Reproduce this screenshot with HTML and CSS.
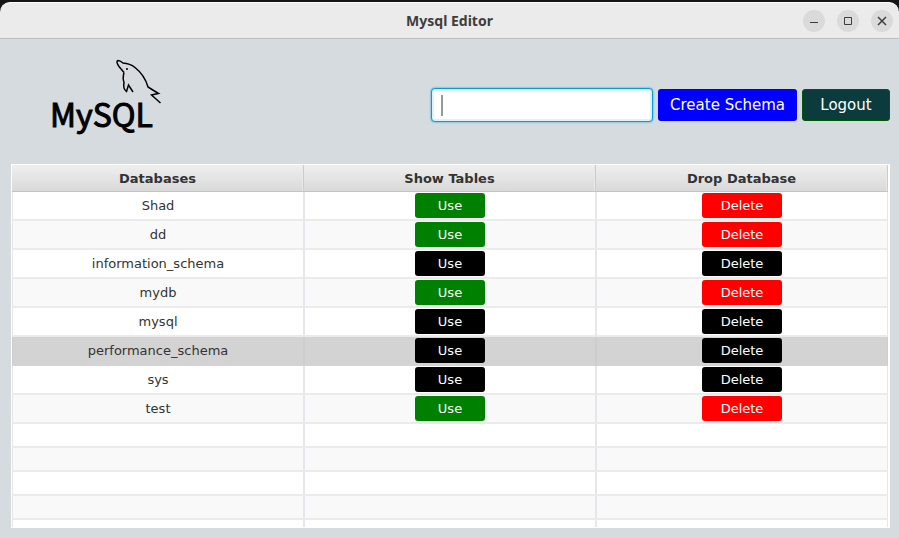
FILE: index.html
```html
<!DOCTYPE html>
<html lang="en">
<head>
<meta charset="utf-8">
<title>Mysql Editor</title>
<link rel="stylesheet" href="styles.css">
</head>
<body>
<div class="window">
  <header class="titlebar">
    <h1 class="title">Mysql Editor</h1>
    <div class="controls">
      <button class="control" type="button" aria-label="Minimize"><svg viewBox="0 0 22 22"><path d="M7 12.5h8"/></svg></button>
      <button class="control" type="button" aria-label="Maximize"><svg viewBox="0 0 22 22"><path d="M7.5 7.5h7v7h-7z"/></svg></button>
      <button class="control" type="button" aria-label="Close"><svg viewBox="0 0 22 22"><path d="M7 7l8 8M15 7l-8 8" stroke-width="1.5"/></svg></button>
    </div>
  </header>
  <main class="content">
    <div class="toolbar">
      <svg class="logo" viewBox="0 0 130 90" role="img" aria-label="MySQL">
        <text class="logo-text" x="10" y="77">MySQL</text>
        <path class="dolphin" d="M84 22.500L79 16.500Q75.500 11.500 78 10.500Q80 10.500 83 13Q90 13.500 95 17.500C102 23 106 30 108 37L112 39.500L118.500 43.500L111.500 45L120.500 53M84 22.500C82.500 28 83 30 84 32.500C83 37 84.500 40 86.500 41.500L88.500 35L93 42"/>
        <circle cx="87" cy="19" r="1"/>
      </svg>
      <form class="actions">
        <input class="schema" type="text" aria-label="Schema name" autocomplete="off">
        <span class="caret"></span>
        <button class="create" type="button">Create Schema</button>
        <button class="logout" type="button">Logout</button>
      </form>
    </div>
    <div class="table-view">
      <table>
        <thead><tr><th>Databases</th><th>Show Tables</th><th>Drop Database</th></tr></thead>
        <tbody>
          <tr><td>Shad</td><td><button class="use" type="button">Use</button></td><td><button class="drop" type="button">Delete</button></td></tr>
          <tr><td>dd</td><td><button class="use" type="button">Use</button></td><td><button class="drop" type="button">Delete</button></td></tr>
          <tr class="system"><td>information_schema</td><td><button class="use" type="button">Use</button></td><td><button class="drop" type="button">Delete</button></td></tr>
          <tr><td>mydb</td><td><button class="use" type="button">Use</button></td><td><button class="drop" type="button">Delete</button></td></tr>
          <tr class="system"><td>mysql</td><td><button class="use" type="button">Use</button></td><td><button class="drop" type="button">Delete</button></td></tr>
          <tr class="system selected"><td>performance_schema</td><td><button class="use" type="button">Use</button></td><td><button class="drop" type="button">Delete</button></td></tr>
          <tr class="system"><td>sys</td><td><button class="use" type="button">Use</button></td><td><button class="drop" type="button">Delete</button></td></tr>
          <tr><td>test</td><td><button class="use" type="button">Use</button></td><td><button class="drop" type="button">Delete</button></td></tr>
          <tr class="empty"><td></td><td></td><td></td></tr>
          <tr class="empty"><td></td><td></td><td></td></tr>
          <tr class="empty"><td></td><td></td><td></td></tr>
          <tr class="empty"><td></td><td></td><td></td></tr>
          <tr class="empty"><td></td><td></td><td></td></tr>
        </tbody>
      </table>
    </div>
  </main>
</div>
</body>
</html>
```
FILE: styles.css
```css
* { box-sizing: border-box; }
body {
  margin: 0;
  background: #151518;
  color: #333;
  font: 13px "DejaVu Sans", sans-serif;
}
button { border: 0; padding: 0; color: #fff; font: inherit; border-radius: 3px; }
.window { height: 100vh; padding-top: 2px; display: flex; flex-direction: column; }
.titlebar {
  display: grid;
  grid-template-columns: 1fr auto 1fr;
  align-items: center;
  height: 37px;
  flex: none;
  padding: 0 6px;
  background: #ebebeb;
  border-top: 1px solid #fff;
  border-bottom: 1px solid #bdbdbd;
  border-radius: 10px 10px 0 0;
}
.title { grid-column: 2; margin: 0; color: #3d3d3d; font: bold 14px "Noto Sans", sans-serif; }
.controls { display: flex; justify-content: flex-end; gap: 12px; }
.control { width: 22px; height: 22px; border-radius: 50%; background: #dadada; }
.control svg { display: block; fill: none; stroke: #3d3d3d; }
.content {
  flex: 1;
  min-height: 0;
  display: flex;
  flex-direction: column;
  background: #d6dbdf;
  padding: 11px 9px 10px 11px;
}
.toolbar { display: flex; justify-content: space-between; align-items: flex-start; height: 114px; flex: none; }
.logo { width: 130px; height: 90px; margin-left: 29px; }
.logo-text { font: 32px "Noto Sans CJK JP", sans-serif; stroke: #000; stroke-width: 1; }
.dolphin { fill: none; stroke: #000; stroke-width: 1.5; }
.actions { position: relative; display: flex; align-items: center; gap: 5px; margin-top: 38px; }
.schema {
  width: 222px;
  height: 34px;
  padding: 0 10px;
  border: 1px solid #039ed3;
  border-radius: 4px;
  outline: 0;
  background: #fff;
  box-shadow: 0 0 2px #039ed3, inset 0 0 0 2px #e0f2f8;
  font: 15px "DejaVu Sans", sans-serif;
}
.caret { position: absolute; left: 10px; top: 7px; width: 2px; height: 21px; background: #999; }
.create { width: 139px; height: 32px; background: #00f; font-size: 15px; }
.logout { width: 88px; height: 32px; background: #0b3b3c; border: 1px solid #005800; font-size: 15px; }
.table-view { flex: 1; min-height: 0; overflow: hidden; background: #fff; border: 1px solid #fff; }
table { width: calc(100% - 1px); table-layout: fixed; border-spacing: 0; }
th, td { padding: 0; text-align: center; }
th {
  height: 27px;
  background: linear-gradient(#efefef, #d9d9d9);
  border-right: 1px solid #c8cccf;
  border-bottom: 1px solid #c3c3c3;
  box-shadow: inset -1px 0 #e9e9e9;
}
td {
  height: 29px;
  border: solid #e5e7ea;
  border-width: 0 1px 2px;
  border-bottom-color: #ebebeb;
}
tr:nth-child(even) td { background: #f9f9f9; }
tr.selected td { background: #d3d3d3; border-color: #cbcdcf; border-bottom-color: #d3d3d3; }
.empty td { height: 24px; }
.use, .drop { display: block; height: 25px; margin: 1px auto; }
.use { width: 70px; background: #008000; }
.drop { width: 80px; background: #f00; }
.system button { background: #000; }
```
